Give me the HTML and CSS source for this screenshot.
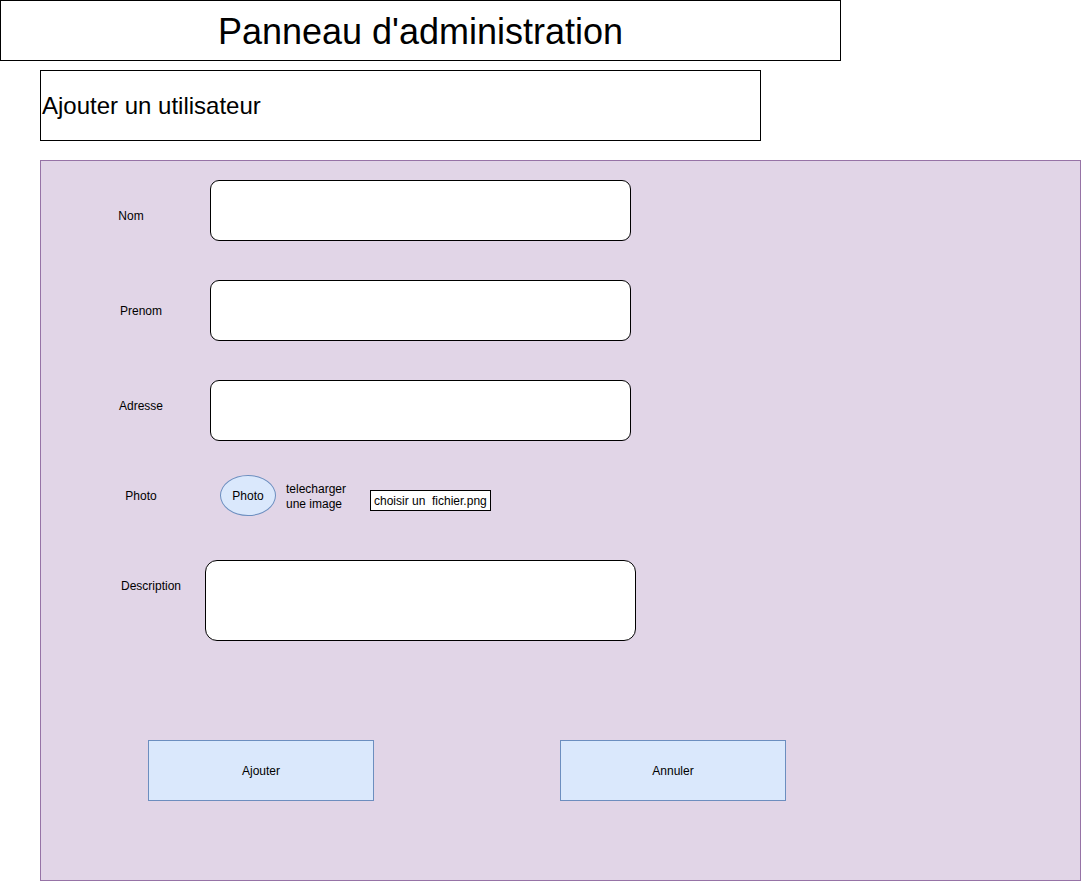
FILE: index.html
```html
<!DOCTYPE html>
<html lang="fr">
<head>
  <meta charset="UTF-8" />
  <meta name="viewport" content="width=device-width, initial-scale=1.0"/>
  <title>Panneau d'administration</title>
  <link rel="stylesheet" href="styles.css">
</head>
<body>

  <h1 class="title">Panneau d'administration</h1>

  <h2 class="subtitle">Ajouter un utilisateur</h2>

  <form class="panel" onsubmit="return false">
    <div class="row">
      <label class="label label-nom" for="nom">Nom</label>
      <input class="field" type="text" id="nom" />
    </div>

    <div class="row row-gap">
      <label class="label label-prenom" for="prenom">Prenom</label>
      <input class="field" type="text" id="prenom" />
    </div>

    <div class="row row-gap">
      <label class="label label-adresse" for="adresse">Adresse</label>
      <input class="field" type="text" id="adresse" />
    </div>

    <div class="row row-photo">
      <span class="label label-photo">Photo</span>
      <div class="avatar">Photo</div>
      <div class="upload-text">telecharger<br>une image</div>
      <div class="file-box">choisir un&nbsp; fichier.png</div>
    </div>

    <div class="row row-desc">
      <label class="label label-desc" for="description">Description</label>
      <textarea class="field field-desc" id="description"></textarea>
    </div>

    <div class="actions">
      <button class="btn" type="submit">Ajouter</button>
      <button class="btn" type="reset">Annuler</button>
    </div>
  </form>

</body>
</html>
```

FILE: styles.css
```css
:root {
  --panel-bg: #e1d5e7;
  --panel-border: #9673a6;
  --blue-bg: #dae8fc;
  --blue-border: #6c8ebf;
}

body {
  margin: 0;
  font-family: 'Liberation Sans', Arial, sans-serif;
  color: #000;
  background: #fff;
}

.title {
  box-sizing: border-box;
  width: 841px;
  height: 61px;
  margin: 0;
  border: 1px solid #000;
  font-size: 36px;
  font-weight: normal;
  line-height: 61px;
  text-align: center;
}

.subtitle {
  box-sizing: border-box;
  width: 721px;
  height: 71px;
  margin: 9px 0 0 40px;
  padding-left: 1px;
  border: 1px solid #000;
  font-size: 24px;
  font-weight: normal;
  line-height: 69px;
}

.panel {
  box-sizing: border-box;
  width: 1041px;
  height: 721px;
  margin: 19px 0 0 40px;
  padding-top: 19px;
  background: var(--panel-bg);
  border: 1px solid var(--panel-border);
}

.row {
  display: flex;
  align-items: flex-start;
  height: 61px;
}

.row-gap {
  margin-top: 39px;
}

.label {
  box-sizing: border-box;
  width: 120px;
  margin-left: 40px;
  font-size: 12px;
  line-height: 14px;
  text-align: center;
}

.label-nom {
  padding-right: 20px;
  margin-top: 29px;
}

.label-prenom {
  margin-top: 24px;
}

.label-adresse {
  margin-top: 19px;
}

.label-photo {
  margin-top: 14px;
}

.label-desc {
  padding-left: 20px;
  margin-top: 19px;
}

.field {
  box-sizing: border-box;
  width: 421px;
  height: 61px;
  margin: 0 0 0 9px;
  padding: 0 10px;
  border: 1px solid #000;
  border-radius: 9px;
  background: #fff;
  font: inherit;
  outline: none;
}

.row-photo {
  height: 41px;
  margin-top: 34px;
}

.avatar {
  box-sizing: border-box;
  width: 56px;
  height: 41px;
  margin-left: 19px;
  border: 1px solid var(--blue-border);
  border-radius: 50%;
  background: var(--blue-bg);
  font-size: 12px;
  line-height: 40px;
  text-align: center;
}

.upload-text {
  width: 84px;
  margin: 7px 0 0 10px;
  font-size: 12px;
  line-height: 15px;
}

.file-box {
  box-sizing: border-box;
  width: 121px;
  height: 21px;
  margin-top: 15px;
  padding-left: 3px;
  border: 1px solid #000;
  background: #fff;
  font-size: 12px;
  line-height: 20px;
  white-space: nowrap;
}

.row-desc {
  height: 81px;
  margin-top: 44px;
}

.field-desc {
  width: 431px;
  height: 81px;
  margin-left: 4px;
  border-radius: 12px;
  resize: none;
}

.actions {
  display: flex;
  gap: 186px;
  margin: 99px 0 0 107px;
}

.btn {
  box-sizing: border-box;
  width: 226px;
  height: 61px;
  border: 1px solid var(--blue-border);
  background: var(--blue-bg);
  font-family: inherit;
  font-size: 12px;
  color: #000;
  cursor: pointer;
}
```
